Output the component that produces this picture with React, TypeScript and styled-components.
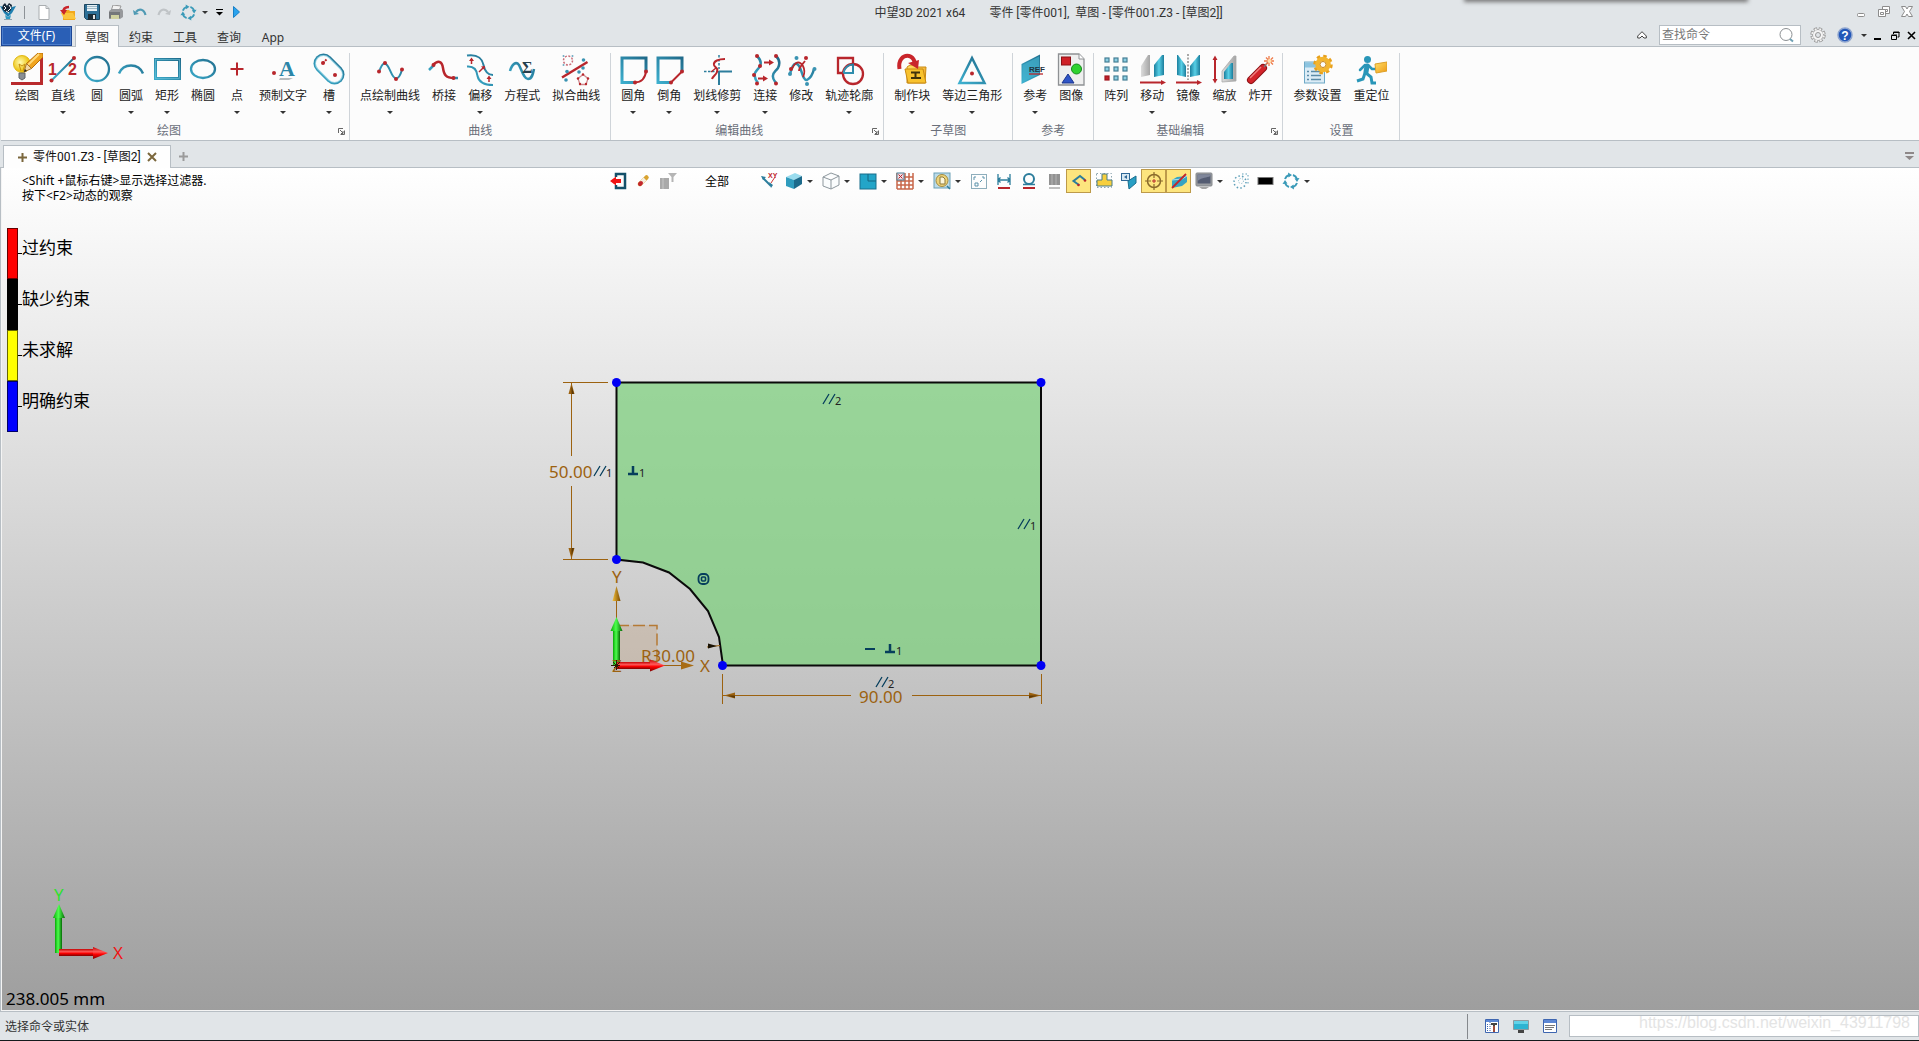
import React from "react";
import styled, { createGlobalStyle, css } from "styled-components";

const UI_FONT = `"Noto Sans", "Noto Sans CJK SC", sans-serif`;
const EDGE = "#b7bec4";
const CHROME = "#e1e5e8";
const DIM = "#9c6210";
const NAVY = "#063e5c";

const GlobalStyle = createGlobalStyle`
  * { box-sizing: border-box; }
  body {
    margin: 0;
    background: ${CHROME};
    font-family: ${UI_FONT};
    font-size: 12px;
    line-height: 16px;
    color: #333;
  }
  button, input, select { font: inherit; color: inherit; }
  button { background: none; border: 0; padding: 0; cursor: default; }
  svg { display: block; flex: none; }
`;

/* ---------- layout ---------- */

const Shell = styled.div`
  display: flex;
  flex-direction: column;
  height: 100vh;
  overflow: hidden;
  position: relative;
`;

const OverlayShadow = styled.div`
  position: absolute;
  top: -2px;
  right: 173px;
  width: 280px;
  height: 2px;
  box-shadow: 0 0 4px 2px #777;
`;

const TitleBar = styled.header`
  display: flex;
  height: 25px;
  flex: none;
`;

const QuickAccess = styled.div`
  display: flex;
  flex: none;
  align-items: center;
  height: 24px;
`;

const QuickButton = styled.button<{ $w?: number }>`
  display: flex;
  align-items: center;
  justify-content: center;
  width: ${(p) => p.$w ?? 24}px;
  height: 24px;
`;

const QuickDivider = styled.span`
  width: 1px;
  height: 13px;
  margin-right: 7px;
  background: #8d9297;
`;

const Title = styled.h1`
  display: flex;
  justify-content: center;
  gap: 24px;
  flex: 1;
  margin: 0;
  padding-top: 5px;
  font-family: Roboto, "Noto Sans CJK SC", sans-serif;
  font-size: 12px;
  font-weight: 400;
  line-height: 16px;
  white-space: pre;
`;

const WindowControls = styled.div`
  display: flex;
  align-items: center;
  width: 66px;
  height: 24px;
  justify-content: space-between;
  padding-right: 4px;
`;

const WindowButton = styled.button`
  width: 16px;
  height: 16px;
`;

const MenuRow = styled.nav`
  display: flex;
  flex: none;
  height: 22px;
  border-bottom: 1px solid ${EDGE};
`;

const FileButton = styled.button`
  width: 71px;
  height: 20px;
  margin: 1px 3px 0 1px;
  border: 1px solid #1d4796;
  box-shadow: inset 0 0 0 1px #4b7dcb;
  background: #2a5fb6;
  color: #fff;
`;

const MenuTab = styled.button<{ $active?: boolean }>`
  width: 44px;
  height: 22px;
  padding-top: 2px;
  border: 1px solid transparent;
  border-bottom: 0;
  ${(p) =>
    p.$active &&
    css`
      background: #fcfcfc;
      border-color: ${EDGE};
    `}
`;

const MenuRight = styled.div`
  display: flex;
  align-items: center;
  margin-left: auto;
  height: 20px;
`;

const SearchBox = styled.label`
  display: flex;
  align-items: center;
  width: 142px;
  height: 20px;
  margin: 0 5px 0 9px;
  padding-right: 6px;
  border: 1px solid ${EDGE};
  background: #fff;
`;

const SearchInput = styled.input`
  flex: 1;
  min-width: 0;
  border: 0;
  outline: 0;
  padding: 0 2px;
  background: none;
  &::placeholder { color: #777; opacity: 1; }
`;

const IconButton = styled.button<{ $w: number }>`
  display: flex;
  align-items: center;
  justify-content: center;
  width: ${(p) => p.$w}px;
  height: 20px;
`;

const Ribbon = styled.div`
  display: flex;
  flex: none;
  height: 94px;
  padding: 6px 0 0 4px;
  margin-left: 1px;
  background: #fcfcfc;
  border-bottom: 1px solid ${EDGE};
`;

const Group = styled.section`
  display: flex;
  flex-direction: column;
  justify-content: space-between;
  border-right: 1px solid #cfd4d9;
`;

const GroupTools = styled.div`
  display: flex;
  padding: 0 4px;
`;

const GroupFooter = styled.div`
  display: flex;
  align-items: center;
  height: 18px;
`;

const GroupTitle = styled.h2`
  flex: 1;
  margin: 0;
  font-size: 12px;
  line-height: 18px;
  font-weight: 400;
  text-align: center;
  color: #6a6f7a;
`;

const Launcher = styled.button`
  display: flex;
  align-items: center;
  justify-content: center;
  width: 16px;
  height: 16px;
`;

const ToolButton = styled.button`
  display: flex;
  flex-direction: column;
  align-items: center;
  min-width: 32px;
  padding: 0 6px;
  color: #222;
`;

const ToolIcon = styled.svg`
  margin: 0 -6px;
`;

const ToolLabel = styled.span`
  padding: 2px 0 7px;
  line-height: 16px;
  white-space: nowrap;
`;

const Caret = styled.span`
  width: 0;
  height: 0;
  flex: none;
  border: 3px solid transparent;
  border-top-color: #333;
  border-bottom: 0;
`;

const DocTabs = styled.div`
  display: flex;
  align-items: flex-end;
  flex: none;
  height: 27px;
  padding: 0 4px 0 3px;
  border-bottom: 1px solid ${EDGE};
`;

const DocTab = styled.div`
  display: flex;
  flex: none;
  align-items: center;
  gap: 5px;
  width: 168px;
  height: 23px;
  padding: 0 13px;
  margin-bottom: -1px;
  border: 1px solid ${EDGE};
  border-bottom: 0;
  background: #fefefe;
  color: #111;
`;

const DocName = styled.span`
  flex: 1;
  font-family: Roboto, "Noto Sans CJK SC", sans-serif;
  white-space: nowrap;
`;

const DocButton = styled.button<{ $end?: boolean }>`
  display: flex;
  align-items: center;
  justify-content: center;
  width: 11px;
  height: 22px;
  margin-left: ${(p) => (p.$end ? "auto" : "7px")};
`;

const TabClose = styled.button`
  width: 10px;
  height: 10px;
`;

const Canvas = styled.main`
  position: relative;
  flex: 1;
  min-height: 0;
  border-left: 1px solid ${EDGE};
  border-bottom: 1px solid ${EDGE};
  background: linear-gradient(#fff, #9e9e9e);
  box-shadow: inset 1px -1px 0 #f4f4f4;
  overflow: hidden;
`;

const ViewToolbar = styled.div`
  display: flex;
  justify-content: center;
  height: 26px;
  padding-top: 1px;
`;

const ViewButton = styled.button<{ $on?: boolean }>`
  display: flex;
  align-items: center;
  justify-content: center;
  width: 25px;
  height: 24px;
  ${(p) =>
    p.$on &&
    css`
      background: #fde57e;
      border: 1px solid #bd9a4a;
    `}
`;

const ViewMenu = styled.button`
  display: flex;
  align-items: center;
  width: 12px;
  height: 24px;
  padding-left: 1px;
`;

const FilterSelect = styled.select`
  appearance: none;
  width: 76px;
  height: 26px;
  padding: 0 0 0 25px;
  border: 0;
  background: none;
  color: #000;
`;

const Hint = styled.p`
  position: absolute;
  top: 5px;
  left: 21px;
  margin: 0;
  line-height: 15px;
  color: #000;
`;

const Legend = styled.ul`
  position: absolute;
  top: 60px;
  left: 6px;
  margin: 0;
  padding: 0;
  list-style: none;
  color: #000;
  font-size: 17px;
`;

const LegendRow = styled.li`
  display: flex;
  align-items: center;
  height: 51px;
`;

const Swatch = styled.span<{ $color: string }>`
  width: 11px;
  height: 51px;
  border: 1px solid rgba(0, 0, 0, 0.6);
  background: ${(p) => p.$color};
`;

const Tick = styled.span`
  width: 4px;
  height: 1px;
  background: #000;
`;

const LegendLabel = styled.span`
  padding-bottom: 11px;
  line-height: 20px;
`;

const Sketch = styled.svg`
  position: absolute;
  top: 192px;
  left: 539px;
`;

const Triad = styled.svg`
  position: absolute;
  left: 40px;
  bottom: 41px;
`;

const Measure = styled.div`
  position: absolute;
  left: 5px;
  bottom: 0;
  font-size: 17px;
  line-height: 24px;
  color: #000;
`;

const StatusBar = styled.footer`
  display: flex;
  align-items: center;
  flex: none;
  height: 29px;
  padding-left: 5px;
  position: relative;
  border-bottom: 1px solid #15191c;
`;

const StatusText = styled.span`
  flex: 1;
  padding-top: 2px;
`;

const StatusTools = styled.div`
  display: flex;
  align-items: center;
  gap: 13px;
  height: 25px;
  padding: 0 11px 0 16px;
  border-left: 1px solid #85898d;
`;

const StatusInput = styled.input`
  width: 350px;
  height: 22px;
  border: 1px solid ${EDGE};
  background: #fff;
`;

const Watermark = styled.span`
  position: absolute;
  right: 9px;
  top: 1px;
  font: 16px/20px "Liberation Sans", Arial, sans-serif;
  color: #e4e4e4;
`;

/* ---------- shared drawing pieces ---------- */

const B = "url(#teal)";
const RED = "#b8262c";
const STEEL = "#2c7d9c";

const HiddenDefs = styled.svg`
  position: absolute;
`;

const Defs = () => (
  <HiddenDefs width="0" height="0" aria-hidden="true">
    <defs>
      <linearGradient id="teal" gradientUnits="userSpaceOnUse" x1="4" y1="30" x2="28" y2="2">
        <stop offset="0" stopColor="#3db0cf" />
        <stop offset="1" stopColor="#1f6888" />
      </linearGradient>
      <linearGradient id="fin" x1="0" y1="0" x2="1" y2="0">
        <stop offset="0" stopColor="#1b7f9e" />
        <stop offset=".5" stopColor="#57cfe6" />
        <stop offset="1" stopColor="#1c7c9b" />
      </linearGradient>
      <linearGradient id="grey" x1="0" y1="0" x2="1" y2="0">
        <stop offset="0" stopColor="#dcdcdc" />
        <stop offset="1" stopColor="#a5a5a5" />
      </linearGradient>
      <linearGradient id="gold" x1="0" y1="0" x2="1" y2="1">
        <stop offset="0" stopColor="#ffe169" />
        <stop offset="1" stopColor="#ee9a16" />
      </linearGradient>
      <radialGradient id="glow" cx=".4" cy=".4">
        <stop offset="0" stopColor="#fffbb0" />
        <stop offset="1" stopColor="#edc412" />
      </radialGradient>
      <linearGradient id="greenV" x1="0" y1="0" x2="1" y2="0">
        <stop offset="0" stopColor="#07a807" />
        <stop offset=".45" stopColor="#4dff4d" />
        <stop offset="1" stopColor="#056b05" />
      </linearGradient>
      <linearGradient id="redH" x1="0" y1="0" x2="0" y2="1">
        <stop offset="0" stopColor="#c40505" />
        <stop offset=".4" stopColor="#ff5a5a" />
        <stop offset=".6" stopColor="#f00" />
        <stop offset="1" stopColor="#7c0202" />
      </linearGradient>
      <linearGradient id="goldHead" x1="0" y1="0" x2="1" y2="0">
        <stop offset="0" stopColor="#f3bf3a" />
        <stop offset="1" stopColor="#7a4a00" />
      </linearGradient>
    </defs>
  </HiddenDefs>
);

const Dots = ({ at, fill = RED, r = 2 }: { at: number[][]; fill?: string; r?: number }) => (
  <>
    {at.map(([x, y]) => (
      <circle key={`${x}-${y}`} cx={x} cy={y} r={r} fill={fill} />
    ))}
  </>
);

const Icon32 = ({ children }: { children: React.ReactNode }) => (
  <ToolIcon width="32" height="33" viewBox="0 0 32 33" fill="none" strokeWidth="2" aria-hidden="true">
    {children}
  </ToolIcon>
);

const Icon18 = ({ children }: { children: React.ReactNode }) => (
  <svg width="18" height="18" viewBox="0 0 18 18" fill="none" aria-hidden="true">
    {children}
  </svg>
);

/* ---------- ribbon icons ---------- */

const icons: Record<string, React.ReactNode> = {
  draw: (
    <>
      <path d="M30.500 5v26M0 30.500h32" stroke="#b92a2d" strokeWidth="3" />
      <circle cx="11" cy="11" r="8.500" fill="url(#glow)" stroke="#e2b91a" strokeWidth="1" />
      <path d="M8 11l2 7M14 11l-2 7M8 11l3 2 3-2" stroke="#c88f10" strokeWidth="1" />
      <path d="M8 20h6v5l-3 2-3-2z" fill="#8a8f94" stroke="#5f6468" strokeWidth="1" />
      <path d="M27 0h5v4L20 16l-5-5z" fill="#f0a41e" stroke="#b76d08" strokeWidth="1" />
      <path d="M28 1L17 12" stroke="#ffd978" strokeWidth="2" />
      <path d="M15.500 10.500l5 5L13 19z" fill="#f4d8a2" stroke="#a8752a" strokeWidth="1" />
      <path d="M13 19l1-3 2 2z" fill="#222" />
    </>
  ),
  line: (
    <>
      <path d="M4.500 27.500L27 5" stroke={B} />
      <Dots at={[[4.5, 27.5], [27, 5]]} />
      <text x="1" y="22" fontFamily="Liberation Sans" fontWeight="700" fontSize="16" fill={RED}>1</text>
      <text x="21" y="22" fontFamily="Liberation Sans" fontWeight="700" fontSize="16" fill={RED}>2</text>
    </>
  ),
  circle: <circle cx="16" cy="16" r="12" stroke={B} strokeWidth="2.300" />,
  arc: <path d="M4 20.500A13 13 0 0 1 28 20.500" stroke={B} strokeWidth="2.500" />,
  rect: (
    <>
      <rect x="4.500" y="6.500" width="24" height="19" stroke={B} strokeWidth="3" />
      <rect x="4.500" y="6.500" width="24" height="19" stroke="#6fc3da" strokeWidth=".6" />
    </>
  ),
  ellipse: <ellipse cx="16" cy="16" rx="12" ry="9" stroke={B} strokeWidth="2.300" />,
  point: <path d="M16 9.500v13M9.500 16h13" stroke={RED} />,
  text: (
    <>
      <Dots at={[[7, 20]]} />
      <path d="M13 25h13l-4 2h-10z" fill="#b9bcbe" />
      <text x="12" y="23" fontFamily="Liberation Serif" fontWeight="700" fontSize="22" fill="#2b86a8">A</text>
    </>
  ),
  slot: (
    <>
      <path d="M10.500 10.500l11 11" stroke={B} strokeWidth="20" strokeLinecap="round" />
      <path d="M10.500 10.500l11 11" stroke="#8fd0e2" strokeWidth="17" strokeLinecap="round" />
      <path d="M10.500 10.500l11 11" stroke="#fcfcfc" strokeWidth="15" strokeLinecap="round" />
      <Dots at={[[10, 10], [22, 22]]} />
      <path d="M10 10l4-4" stroke={RED} strokeDasharray="2 1" />
    </>
  ),
  spline: (
    <>
      <path d="M5 19C7 13 9 10 11 10.500C16 12 17 25 22 25.500C26 25 27 20 28 16.500" stroke={B} />
      <Dots at={[[5, 18.5], [11, 10], [22, 26], [28, 16.5]]} />
    </>
  ),
  bridge: (
    <>
      <path d="M1 17l5-5M25 25h5" stroke={B} strokeWidth="2.500" />
      <path d="M5 12C10 7 14 8 15 15C16 22 18 25 26 25" stroke={RED} strokeWidth="2.500" />
      <Dots at={[[5.5, 12], [25.5, 25]]} />
    </>
  ),
  offset: (
    <>
      <path d="M3 2.500C14 1 18 5 19.500 12C21 19 24 22 29 22M3 13.500C10 13 13 17 13.500 23C15 30 22 32 29 32" stroke={B} />
      <path d="M7.500 11V6M15 19l4-4M25 29v-5" stroke={RED} strokeWidth="1.500" />
      <path d="M5 8l2.500-3.500L10 8zM17 13.500l4-.5-.5 4zM22.500 26l2.500-3.500L27.500 26z" fill={RED} />
    </>
  ),
  equation: (
    <>
      <path d="M4 18C6 11 10 8 13 12C16 18 18 26 22 26C26 26 27 21 28 16" stroke={B} strokeWidth="2.500" />
      <text x="16" y="20" fontFamily="Liberation Serif" fontWeight="700" fontSize="16" fill="#263f4c">Σ</text>
    </>
  ),
  fit: (
    <>
      <path d="M2 24.500L27.500 9" stroke={RED} strokeWidth="2.500" />
      <circle cx="8" cy="7.500" r="4.500" stroke="#c96f7a" strokeWidth="1.500" strokeDasharray="2 1.500" />
      <path d="M23 21.500l5 4-2 6h-6l-2-6z" stroke="#d08a90" strokeWidth="1.300" />
      <Dots at={[[3.500, 3], [12.500, 3], [3.500, 12]]} r={1} fill="#6da9c0" />
      <Dots at={[[7, 18.5], [6, 27], [19, 19], [23.500, 7], [23, 15]]} r={1.800} fill="#3a93b2" />
      <Dots at={[[23, 21.5], [28, 25.5], [26, 31], [20, 31], [18, 25.5]]} r={1.200} />
    </>
  ),
  fillet: (
    <>
      <path d="M18 29.500H5V5H29V18" stroke={B} strokeWidth="3" />
      <path d="M29 18Q28 29 18 29.500" stroke={RED} />
      <Dots at={[[29, 18.5], [18, 29.5]]} />
    </>
  ),
  chamfer: (
    <>
      <path d="M18 29.500H5V5H29V18" stroke={B} strokeWidth="3" />
      <path d="M29 18.500L18 29.500" stroke={RED} />
      <Dots at={[[29, 18.5], [18, 29.5]]} />
    </>
  ),
  trim: (
    <>
      <path d="M18 18v14M18 18.500h13" stroke={STEEL} />
      <path d="M18 2v14M3 18.500h13" stroke={STEEL} strokeWidth="1.500" strokeDasharray="2.500 1.500" />
      <path d="M24 6C18 6 12 8 13 12C14 15 18 15 16 19C15 22 12 23 11 26" stroke={RED} />
      <path d="M10 19l5-4" stroke={RED} strokeWidth="1.500" />
    </>
  ),
  connect: (
    <>
      <path d="M8 3C11 6 13 9 11 13C9 17 5 19 5.500 22C6 26 7 28 9 30M27 3C31 7 31 11 29 15C26 19 23 20 24 24C24 27 26 28 27 30" stroke={B} strokeWidth="2.500" />
      <path d="M15 9.500h6M9 25.500h6" stroke={RED} />
      <path d="M20 6.500l5 3-5 3zM14 22.500l5 3-5 3z" fill={RED} />
      <Dots at={[[8, 3], [11, 13], [5, 22], [8, 30.5], [27, 3], [27, 30.5]]} />
    </>
  ),
  modify: (
    <>
      <path d="M5 21C7 13 9 10 12 11C17 13 17 28 22 27C26 25 28 20 29 16" stroke={B} strokeWidth="2.500" />
      <path d="M7 16C10 9 14 7 18 13C20 17 20 20 18 24M14 18C14 14 17 12 20 8" stroke={RED} strokeWidth="1.800" />
      <Dots at={[[6, 16], [21, 5]]} />
      <Dots at={[[11.5, 5], [29.5, 16], [22, 31], [5, 21]]} fill="#3a93b2" />
    </>
  ),
  contour: (
    <>
      <path d="M10.500 20H5V5h15v6" stroke={RED} strokeWidth="2.300" />
      <circle cx="20" cy="21" r="10" stroke={RED} strokeWidth="2.300" />
      <path d="M10.500 20H20V11.500A9.500 9.500 0 0 0 10.500 20" stroke={B} />
    </>
  ),
  block: (
    <>
      <path d="M11 14l3-2h5l2 2h9l-1 16H11z" fill="url(#gold)" stroke="#c98a12" strokeWidth="1" />
      <path d="M9 16h18l3 14H12z" fill="#f8c22e" stroke="#c98a12" strokeWidth="1" />
      <path d="M15 19.500h9M19.500 19v6M15 25h10" stroke="#40330b" />
      <path d="M3.500 16C2 7 7 2 13 3C17 4 18 7 18.500 9" stroke="#c9252b" strokeWidth="4" />
      <path d="M12 10l11-3-1 9z" fill="#c9252b" />
    </>
  ),
  triangle: (
    <>
      <path d="M16 5L3.500 30h25z" stroke={B} strokeWidth="2.500" />
      <Dots at={[[16, 20.5]]} />
    </>
  ),
  reference: (
    <>
      <path d="M2.500 11L21 1.500V22L2.500 31z" fill="url(#teal)" />
      <path d="M3.500 12L20 3.500V21L3.500 29z" fill="#48b8d2" opacity=".6" />
      <text x="10" y="19" fontFamily="Liberation Sans" fontWeight="700" fontSize="8" fill="#1f3340">REF</text>
      <path d="M10 21h14" stroke={RED} strokeWidth="1.300" />
    </>
  ),
  image: (
    <>
      <path d="M3.500 1H24l5 5v26H3.500z" fill="#efefef" stroke="#8e9194" strokeWidth="1.300" />
      <path d="M24 1v5h5" fill="#fff" stroke="#8e9194" strokeWidth="1" />
      <rect x="6.500" y="4" width="9" height="8" fill="#cf2027" stroke="#8d1015" strokeWidth="1" />
      <circle cx="21.500" cy="16" r="5" fill="#2fd22f" stroke="#148a1c" strokeWidth="1" />
      <path d="M13 21l6 9H7z" fill="#2f55c7" stroke="#1b348c" strokeWidth="1" />
    </>
  ),
  array: (
    <>
      {[5, 14, 23].map((y) =>
        [5, 14, 23].map((x) => (
          <rect
            key={`${x}-${y}`}
            x={x}
            y={y}
            width="4"
            height="4"
            fill={x === 5 && y === 23 ? "#c0202a" : "#8ccfe4"}
            stroke={x === 5 && y === 23 ? "#a01820" : "#467f95"}
            strokeWidth="1.200"
          />
        )),
      )}
    </>
  ),
  move: (
    <>
      <path d="M5 24V13l7-11h2v20z" fill="url(#grey)" />
      <path d="M18 24V12l8-10h2v20z" fill="url(#fin)" />
      <path d="M4 29.500h22" stroke={RED} />
      <path d="M25 27l5 2.500-5 2.500z" fill={RED} />
    </>
  ),
  mirror: (
    <>
      <path d="M5 22V2h1l8 11v11z" fill="url(#fin)" />
      <path d="M18 24V13l9-11h1v20z" fill="url(#fin)" />
      <path d="M16 1v26" stroke="#555" strokeWidth="1" strokeDasharray="2 1.500" />
      <path d="M4 29.500h22" stroke={RED} />
      <path d="M25 27l5 2.500-5 2.500z" fill={RED} />
    </>
  ),
  scale: (
    <>
      <path d="M7 5v22" stroke={RED} />
      <path d="M4.500 7L7 2.500 9.500 7zM4.500 26L7 30.500 9.500 26z" fill={RED} />
      <path d="M14 29V18L26 3h2v25z" fill="url(#grey)" stroke="#aaa" strokeWidth=".8" />
      <path d="M16 26v-7l7-9h2v16z" fill="url(#fin)" />
    </>
  ),
  explode: (
    <>
      <path d="M7 27L19 15" stroke="#8c1014" strokeWidth="8" strokeLinecap="round" />
      <path d="M7 27L19 15" stroke="#d3242a" strokeWidth="6" strokeLinecap="round" />
      <path d="M6 25L17 14" stroke="#f08080" strokeWidth="1.500" />
      <path d="M20 14l4-5" stroke="#777" strokeWidth="1.500" />
      <path d="M25 3v10M20 8h10M22 4.500l7 7M29 4.500l-7 7" stroke="#ee7a4a" strokeWidth="1.300" />
      <circle cx="25.500" cy="8" r="2" fill="#ffe2b0" />
    </>
  ),
  settings: (
    <>
      <rect x="3.500" y="9" width="20" height="21" fill="#dcecf6" stroke="#6fa9c6" strokeWidth="1" />
      <rect x="4" y="9.500" width="19" height="5" fill="#8cc4e0" />
      <path d="M6 18.500h2M6 22.500h2M6 26.500h2M10 18.500h10M10 22.500h10M10 26.500h10" stroke="#5b8ba8" strokeWidth="1.500" />
      <circle cx="22" cy="11.500" r="8" stroke="#e8a01c" strokeWidth="3.500" strokeDasharray="3.300 2.983" />
      <circle cx="22" cy="11.500" r="5.500" fill="#fff" stroke="#f3b52e" strokeWidth="4.500" />
      <circle cx="22" cy="11.500" r="3" fill="#fcfcfc" stroke="#c9820f" strokeWidth="1" />
    </>
  ),
  relocate: (
    <>
      <circle cx="12.500" cy="6.500" r="3.500" fill="#2996b8" />
      <path d="M12 13L11 19" stroke="#2996b8" strokeWidth="5" strokeLinecap="round" />
      <path d="M13 12l4 4h5M10 12l-5 5" stroke="#2996b8" strokeWidth="2.500" strokeLinecap="round" />
      <path d="M10 20l-2 6-6 2M11 20l5 4 1 6h4" stroke="#2996b8" strokeWidth="3" />
      <path d="M20 11l12-2v9l-11 2z" fill="url(#gold)" stroke="#dda029" strokeWidth="1" />
    </>
  ),
};

type Tool = [icon: string, label: string, menu?: boolean];

const ribbonGroups: { title: string; launcher?: boolean; tools: Tool[] }[] = [
  {
    title: "绘图",
    launcher: true,
    tools: [
      ["draw", "绘图"],
      ["line", "直线", true],
      ["circle", "圆"],
      ["arc", "圆弧", true],
      ["rect", "矩形", true],
      ["ellipse", "椭圆"],
      ["point", "点", true],
      ["text", "预制文字", true],
      ["slot", "槽", true],
    ],
  },
  {
    title: "曲线",
    tools: [
      ["spline", "点绘制曲线", true],
      ["bridge", "桥接"],
      ["offset", "偏移", true],
      ["equation", "方程式"],
      ["fit", "拟合曲线"],
    ],
  },
  {
    title: "编辑曲线",
    launcher: true,
    tools: [
      ["fillet", "圆角", true],
      ["chamfer", "倒角", true],
      ["trim", "划线修剪", true],
      ["connect", "连接", true],
      ["modify", "修改"],
      ["contour", "轨迹轮廓", true],
    ],
  },
  {
    title: "子草图",
    tools: [
      ["block", "制作块", true],
      ["triangle", "等边三角形", true],
    ],
  },
  {
    title: "参考",
    tools: [
      ["reference", "参考", true],
      ["image", "图像"],
    ],
  },
  {
    title: "基础编辑",
    launcher: true,
    tools: [
      ["array", "阵列"],
      ["move", "移动", true],
      ["mirror", "镜像"],
      ["scale", "缩放", true],
      ["explode", "炸开"],
    ],
  },
  {
    title: "设置",
    tools: [
      ["settings", "参数设置"],
      ["relocate", "重定位"],
    ],
  },
];

/* ---------- view toolbar icons ---------- */

const RingArrows = () => (
  <>
    <path d="M3 7A6.500 6.500 0 0 1 7 3M11 3A6.500 6.500 0 0 1 15 7M15 11A6.500 6.500 0 0 1 11 15M7 15A6.500 6.500 0 0 1 3 11" stroke="#3a9ab8" strokeWidth="2" />
    <path d="M6 .5l4 2.500-3.500 2.500zM17.500 6l-2.500 4-2.500-3.500zM12 17.500L8 15l3.500-2.500zM.5 12L3 8l2.500 3.500z" fill="#3a9ab8" />
  </>
);

const viewIcons: Record<string, React.ReactNode> = {
  exit: (
    <>
      <path d="M7 5V2h9v14H7v-3" stroke="#14506a" strokeWidth="2.500" />
      <path d="M1 9l6-4.500V7h5v4H7v2.500z" fill="#f01414" />
    </>
  ),
  erase: (
    <>
      <path d="M6 12L12.500 5.500" stroke="#d9a431" strokeWidth="4.500" strokeLinecap="round" />
      <path d="M7 11l4-4" stroke="#f6efe0" strokeWidth="4" />
      <path d="M6 12l1-1" stroke="#c2262c" strokeWidth="4" strokeLinecap="round" />
    </>
  ),
  filter: (
    <>
      <path d="M1 6h9v11H1z" fill="#a9a9a9" />
      <path d="M4 6v11" stroke="#c7c7c7" />
      <path d="M9 1h9l-3.500 4v5h-2V5z" fill="#b5b5b5" />
    </>
  ),
  xy: (
    <>
      <path d="M3 6l8 8" stroke={STEEL} strokeWidth="2" />
      <path d="M11 16L9 10l4 3zM1 4l5 1-3 3z" fill={STEEL} />
      <path d="M11 11l4-6" stroke="#c33" />
      <text x="8" y="6" fontFamily="Liberation Sans" fontWeight="700" fontSize="7" fill="#c0252b">XY</text>
    </>
  ),
  solid: (
    <>
      <path d="M1 5l9-4 7 3-8 4z" fill="#9adcee" />
      <path d="M1 5l8 3v9l-8-3z" fill="#2f9cbe" />
      <path d="M9 8l8-4v8l-8 5z" fill="#1c6a8b" />
    </>
  ),
  wire: <path d="M1 5l8-4 8 3v9l-8 4-8-3zM1 5l8 3 8-4M9 8v9" stroke="#8d979d" fill="#fafcfd" />,
  plane: (
    <>
      <rect x="1" y="2" width="16" height="15" fill="#23a5c8" stroke="#1b6f8b" />
      <path d="M9 2v7h8" stroke="#176580" />
    </>
  ),
  grid: (
    <>
      <path d="M1 5h16M1 9h16M1 13h16M5 1v16M9 1v16M13 1v16M1 17h16M17 1v16M1 1v16" stroke="#c8674a" strokeWidth="1.500" />
      <rect x="1" y="1" width="7" height="7" fill="#f2dadf" stroke="#4a7f96" />
      <path d="M2.500 2.500l4 4M6.500 2.500l-4 4" stroke="#b2262e" />
    </>
  ),
  fitView: (
    <>
      <rect x="1" y="1" width="16" height="15" fill="#bcdbe8" stroke="#6b9fb5" />
      <circle cx="9" cy="8.500" r="6" fill="#ecd37a" stroke="#a38b3f" />
      <path d="M7 5h3l2 2v5H7z" fill="#fbf6dc" stroke="#8d7937" />
      <path d="M14 14l3 3" stroke="#2f7d9c" strokeWidth="1.500" />
    </>
  ),
  window: (
    <>
      <rect x="1.500" y="2.500" width="15" height="14" stroke="#8eaebc" />
      <path d="M4 8V5h2M12 5h2v2M10 10l2-2M5 11h3v3H5z" stroke="#5c93ab" />
    </>
  ),
  width: (
    <>
      <path d="M3 2v11M15 2v11M3 8h12M5.500 5.500L3 8l2.500 2.500M12.500 5.500L15 8l-2.500 2.500" stroke={STEEL} strokeWidth="1.300" />
      <path d="M3 16h12" stroke={RED} strokeWidth="2" />
    </>
  ),
  ring: (
    <>
      <circle cx="9" cy="7" r="5" stroke={STEEL} strokeWidth="2" />
      <path d="M3 12.500h12" stroke={STEEL} strokeWidth="1.500" />
      <path d="M3 16h12" stroke={RED} strokeWidth="2" />
    </>
  ),
  hatch: (
    <>
      <rect x="4" y="2" width="11" height="11" fill="#929292" />
      <path d="M7 2v11M11 2v11" stroke="#b4b4b4" />
      <path d="M4 16h11" stroke="#aaa" strokeWidth="1.500" />
    </>
  ),
  open: (
    <>
      <path d="M9 13L3.500 9 10 4l5 4" stroke={STEEL} strokeWidth="2" />
      <Dots at={[[15, 8.5], [8.5, 13]]} r={1.300} />
    </>
  ),
  tee: (
    <>
      <rect x="1.500" y="1.500" width="15" height="14" stroke="#8ca5b0" strokeDasharray="1.500 2" />
      <path d="M7 2h5v6h5v6H2V8h5z" fill="#f7cf3d" stroke="#4a7c87" />
    </>
  ),
  section: (
    <>
      <rect x="1.500" y="1.500" width="8" height="7" fill="#d7e8f2" stroke="#2e6796" />
      <path d="M7 3L4 5l3 2z" fill="#2e6796" />
      <path d="M8 9l8-5v7l-7 6z" fill="#289fc4" stroke="#1a6e8f" />
    </>
  ),
  target: (
    <>
      <circle cx="9" cy="9" r="6.500" stroke="#8a6a2c" strokeWidth="1.500" />
      <path d="M9 0v6M9 12v6M0 9h6M12 9h6" stroke="#8a6a2c" strokeWidth="1.200" />
      <path d="M9 7v4M7 9h4" stroke="#b8262c" />
    </>
  ),
  clip: (
    <>
      <path d="M2 8l5-3 10-1v6l-5 4-10 2z" fill="#36a4c2" />
      <path d="M2 8l10-1 5-3" stroke="#a8e0ee" />
      <path d="M2 16L16 2" stroke="#c0262c" strokeWidth="1.800" />
    </>
  ),
  monitor: (
    <>
      <rect x="1" y="1" width="16" height="13" rx="1" fill="#9a9da1" stroke="#85888c" />
      <rect x="2.500" y="2.500" width="13" height="9" fill="#545c72" />
      <path d="M2.500 9c5-4 9-3 13-5V2.500h-13z" fill="#7f869a" />
      <path d="M4 15h10l-3 2H7z" fill="#a5a5a5" />
    </>
  ),
  dotted: (
    <>
      <circle cx="8" cy="10" r="6" stroke="#5e9fb8" strokeWidth="1.500" strokeDasharray="1.500 2.200" />
      <circle cx="9" cy="9" r="2.500" stroke="#7eb2c6" strokeDasharray="1 1.500" />
      <path d="M10 2h6v10" stroke="#5e9fb8" strokeDasharray="1.500 2" />
    </>
  ),
  swatch: <rect x="1" y="5.500" width="15" height="7" fill="#000" stroke="#777" />,
  rotate: <RingArrows />,
};

type ViewTool = [name: string, label: string, mode?: "menu" | "on"];

const leadTools: ViewTool[] = [
  ["exit", "退出"],
  ["erase", "清除"],
  ["filter", "过滤"],
];

const viewTools: ViewTool[] = [
  ["xy", "坐标"],
  ["solid", "着色", "menu"],
  ["wire", "线框", "menu"],
  ["plane", "视图", "menu"],
  ["grid", "栅格", "menu"],
  ["fitView", "缩放视图", "menu"],
  ["window", "窗口"],
  ["width", "标注"],
  ["ring", "约束"],
  ["hatch", "填充"],
  ["open", "开放端点", "on"],
  ["tee", "形状"],
  ["section", "剖面"],
  ["target", "捕捉", "on"],
  ["clip", "着色区域", "on"],
  ["monitor", "显示", "menu"],
  ["dotted", "线型"],
  ["swatch", "颜色"],
  ["rotate", "旋转", "menu"],
];

const ViewItem = ({ tool: [name, label, mode] }: { tool: ViewTool }) => (
  <>
    <ViewButton $on={mode === "on"} aria-label={label}>
      <Icon18>{viewIcons[name]}</Icon18>
    </ViewButton>
    {mode === "menu" && (
      <ViewMenu aria-label={`${label}选项`}>
        <Caret />
      </ViewMenu>
    )}
  </>
);

/* ---------- sketch ---------- */

const Parallel = ({ x, y, n }: { x: number; y: number; n: string }) => (
  <g>
    <path d={`M${x} ${y + 10}l6-10M${x + 6} ${y + 10}l6-10`} stroke={NAVY} strokeWidth="1.300" />
    <text x={x + 12} y={y + 11} fontSize="11" fill="#222">{n}</text>
  </g>
);

const Perpendicular = ({ x, y }: { x: number; y: number }) => (
  <g>
    <path d={`M${x} ${y + 8}h10M${x + 5} ${y}v8`} stroke={NAVY} strokeWidth="2.500" />
    <text x={x + 11} y={y + 11} fontSize="11" fill="#222">1</text>
  </g>
);

const SketchDrawing = () => (
  <Sketch width="520" height="360" viewBox="540 360 520 360" fill="none" fontFamily="Noto Sans">
    <path
      d="M616.500 382.500H1041V665.500H723L719 637 708 611 690 589 669 572.500 643 562.500 616.500 559.500z"
      fill="#7fcf7f"
      fillOpacity=".75"
      stroke="#0a0a0a"
      strokeWidth="2"
    />
    <g stroke={DIM}>
      <path d="M563 382.500h45M563 559.500h45M571.500 383v73M571.500 486v73" />
      <path d="M722.500 674v30M1041.500 674v30M723 695.500h128M912 695.500h129" />
    </g>
    <g fill={DIM}>
      <path d="M571.500 383l3 11h-6zM571.500 559l3-11h-6zM724 695.500l11-3v6zM1041 695.500l-12-3v6z" />
    </g>
    <g fill="#5e3a06">
      <path d="M571.500 386l2.500 8h-2.500zM571.500 556l2.500-8h-2.500zM727 695.500l8 2.500v-2.500zM1038 695.500l-9 2.500v-2.500z" />
    </g>
    <rect x="617" y="625" width="40" height="40" fill="#c98d50" fillOpacity=".18" />
    <path d="M617 625.500h40V665" stroke="#b57a35" strokeWidth="1.500" strokeDasharray="12 4" />
    <path d="M616.500 665V600M617 665.500h66" stroke={DIM} />
    <path d="M616.500 586l4 15h-8z" fill="url(#goldHead)" />
    <path d="M694 665.500l-13-4v8z" fill="#a86c14" />
    <rect x="613" y="630" width="7" height="35" fill="url(#greenV)" />
    <path d="M616.500 617l6 14h-12z" fill="url(#greenV)" />
    <g fontSize="17" fill={DIM}>
      <text x="549" y="478">50.00</text>
      <text x="859" y="703">90.00</text>
      <text x="641" y="662">R30.00</text>
      <text x="612" y="583">Y</text>
      <text x="700" y="672">X</text>
      <text x="612" y="672">Z</text>
    </g>
    <rect x="617" y="662" width="34" height="7" fill="url(#redH)" />
    <path d="M665 665.500l-15-6v12z" fill="url(#redH)" />
    <path d="M611 665.500h9M616.500 660v10M613 662l6 6M620 662l-6 6" stroke="#2c1c05" />
    <path d="M707 647l13-1.500" stroke={DIM} />
    <path d="M717 646l-9-2.500v5z" fill="#1a1204" />
    <Parallel x={594} y={466} n="1" />
    <Parallel x={823} y={394} n="2" />
    <Parallel x={1018} y={519} n="1" />
    <Parallel x={876} y={677} n="2" />
    <Perpendicular x={628} y={466} />
    <Perpendicular x={885} y={644} />
    <path d="M865 649h10" stroke={NAVY} strokeWidth="2" />
    <rect x="698.500" y="574" width="10" height="10" rx="4" stroke={NAVY} strokeWidth="1.800" />
    <rect x="701.500" y="577" width="4" height="4" rx="1" stroke={NAVY} strokeWidth="1.600" />
    <Dots at={[[616.5, 382.5], [1041, 382.5], [616.5, 559.5], [722.5, 665.5], [1041, 665.5]]} fill="#0000f5" r={4.500} />
  </Sketch>
);

const TriadDrawing = () => (
  <Triad width="100" height="90" viewBox="40 880 100 90" fontFamily="Noto Sans" fontSize="17">
    <rect x="54" y="917" width="7" height="36" fill="url(#greenV)" />
    <path d="M58 904l6 14H52z" fill="url(#greenV)" />
    <rect x="58" y="949" width="35" height="7" fill="url(#redH)" />
    <path d="M107 953l-15-6v12z" fill="url(#redH)" />
    <text x="53" y="901" fill="#2fe02f">Y</text>
    <text x="112" y="959" fill="#f01414">X</text>
  </Triad>
);

/* ---------- page ---------- */

const legend = [
  ["#ff0000", "过约束"],
  ["#000000", "缺少约束"],
  ["#ffff00", "未求解"],
  ["#0000ff", "明确约束"],
];

const QuickAccessBar = () => (
  <QuickAccess>
    <QuickButton $w={16} aria-label="中望3D">
      <svg width="16" height="18" viewBox="0 0 16 18">
        <path d="M0 3l4 7 4 4 4-4 4-7-4 1-4-2-4 2z" fill="#1f7fb0" />
        <path d="M3 2l2-2 2 3 2-3 3 2-1 5-3 3-4-2-2-3z" fill="#16283a" />
        <path d="M4 3l2 2-2 2M9 2l2 3-3 3M6 8l3 2" stroke="#fff" fill="none" />
        <path d="M5 12l3 2 3-2-1 4H6z" fill="#2f9bc4" />
        <path d="M4 16.500h8" stroke="#8fa3ae" />
      </svg>
    </QuickButton>
    <QuickButton $w={8} aria-label="系统菜单" />
    <QuickDivider />
    <QuickButton aria-label="新建">
      <svg width="12" height="15" viewBox="0 0 12 15">
        <path d="M1 .5h7l3 3v11H1z" fill="#fff" stroke="#a9adb0" />
        <path d="M8 .5v3h3" fill="none" stroke="#a9adb0" />
      </svg>
    </QuickButton>
    <QuickButton aria-label="打开">
      <svg width="16" height="15" viewBox="0 0 16 15">
        <path d="M3 7l3-2h3l1 1h5v9H3z" fill="#f2a81d" />
        <path d="M1 8h12l3 6H4z" fill="#fbc53c" />
        <path d="M3 8C3 4 5 2 9 2" stroke="#c9252b" strokeWidth="2.500" fill="none" />
        <path d="M0 5l7 0-3 5z" fill="#c9252b" />
      </svg>
    </QuickButton>
    <QuickButton aria-label="保存">
      <svg width="16" height="16" viewBox="0 0 16 16">
        <path d="M.5.500h15v15h-13l-2-2z" fill="#2d6f96" stroke="#1e4760" />
        <path d="M3 1h10v6H3z" fill="#e8f1f6" />
        <path d="M3 2.500h10M3 4.500h10" stroke="#9db8c6" />
        <path d="M4 10h8v6H4z" fill="#1b2d38" />
        <path d="M9 11h2v4H9z" fill="#e5e5e5" />
      </svg>
    </QuickButton>
    <QuickButton aria-label="打印">
      <svg width="16" height="15" viewBox="0 0 16 15">
        <path d="M5 0l8 1-2 5H3z" fill="#f2f2f2" stroke="#999" />
        <path d="M1 6l3-2h10l1 2v6l-3 2H1z" fill="#97999c" />
        <path d="M1 7h11v6H1z" fill="#74777a" />
        <path d="M3 10h8v4H3z" fill="#cfd1a0" />
      </svg>
    </QuickButton>
    <QuickButton aria-label="撤销">
      <svg width="14" height="10" viewBox="0 0 14 10">
        <path d="M3 5C6 1 11 2 12.500 8" stroke="#4f9ab4" strokeWidth="2.200" fill="none" />
        <path d="M0 3l1 5 5-1z" fill="#4f9ab4" />
      </svg>
    </QuickButton>
    <QuickButton aria-label="重做">
      <svg width="14" height="10" viewBox="0 0 14 10">
        <path d="M11 5C8 1 3 2 1.500 8" stroke="#bfc3c6" strokeWidth="2.200" fill="none" />
        <path d="M14 3l-1 5-5-1z" fill="#bfc3c6" />
      </svg>
    </QuickButton>
    <QuickButton aria-label="重生成">
      <svg width="17" height="17" viewBox="0 0 18 18" fill="none">
        <RingArrows />
      </svg>
    </QuickButton>
    <QuickButton $w={10} aria-label="重生成选项">
      <Caret />
    </QuickButton>
    <QuickButton $w={18} aria-label="自定义">
      <svg width="7" height="7" viewBox="0 0 7 7">
        <path d="M0 .5h7" stroke="#000" />
        <path d="M0 3h7L3.500 6.500z" fill="#000" />
      </svg>
    </QuickButton>
    <QuickButton $w={16} aria-label="播放">
      <svg width="7" height="12" viewBox="0 0 7 12">
        <path d="M.5.500L6.500 6l-6 5.500z" fill="#2aa3ee" stroke="#187fc6" />
      </svg>
    </QuickButton>
  </QuickAccess>
);

export default function App() {
  return (
    <Shell>
      <GlobalStyle />
      <Defs />
      <TitleBar>
        <QuickAccessBar />
        <Title>
          <span>中望3D 2021 x64</span>
          <span>{"零件 [零件001],  草图 - [零件001.Z3 - [草图2]]"}</span>
        </Title>
        <WindowControls>
          <WindowButton aria-label="最小化">
            <svg width="16" height="16" viewBox="0 0 16 16">
              <rect x="4.500" y="9.500" width="7" height="3" rx="1" fill="#fff" stroke="#8c8c8c" />
            </svg>
          </WindowButton>
          <WindowButton aria-label="还原">
            <svg width="16" height="16" viewBox="0 0 16 16" fill="#fff" stroke="#8c8c8c">
              <path d="M6.500 2.500h7v7h-7zM8.500 5.500h3v2h-3z" />
              <path d="M2.500 5.500h7v7h-7zM4.500 8.500h3v2h-3z" />
            </svg>
          </WindowButton>
          <WindowButton aria-label="关闭">
            <svg width="16" height="16" viewBox="0 0 16 16">
              <path d="M2.500 2.500h4L8 5l1.500-2.500h4l-3 5 3 5h-4L8 10l-1.500 2.500h-4l3-5z" fill="#fff" stroke="#8c8c8c" />
            </svg>
          </WindowButton>
        </WindowControls>
      </TitleBar>

      <MenuRow>
        <FileButton>文件(F)</FileButton>
        <MenuTab $active>草图</MenuTab>
        <MenuTab>约束</MenuTab>
        <MenuTab>工具</MenuTab>
        <MenuTab>查询</MenuTab>
        <MenuTab>App</MenuTab>
        <MenuRight>
          <IconButton $w={16} aria-label="折叠功能区">
            <svg width="10" height="8" viewBox="0 0 10 8" fill="#fff" stroke="#444">
              <path d="M5 .700L9.300 5v2H7L5 5 3 7H.7V5z" />
            </svg>
          </IconButton>
          <SearchBox>
            <SearchInput type="text" placeholder="查找命令" aria-label="查找命令" />
            <svg width="16" height="16" viewBox="0 0 16 16" fill="none">
              <circle cx="8" cy="7.500" r="6" stroke="#8b8f92" />
              <path d="M12 12l3 2.500" stroke="#6fa0b4" strokeWidth="2" />
            </svg>
          </SearchBox>
          <IconButton $w={24} aria-label="设置">
            <svg width="16" height="16" viewBox="0 0 16 16" fill="none">
              <circle cx="8" cy="8" r="6" stroke="#999" strokeWidth="3.500" strokeDasharray="3.200 1.512" />
              <circle cx="8" cy="8" r="5.500" fill="#f4f4f4" stroke="#a6a6a6" />
              <circle cx="8" cy="8" r="6" stroke="#f4f4f4" strokeWidth="1.800" strokeDasharray="1.800 2.912" strokeDashoffset="-.7" />
              <circle cx="8" cy="8" r="2.500" fill={CHROME} stroke="#999" />
            </svg>
          </IconButton>
          <IconButton $w={30} aria-label="帮助">
            <svg width="16" height="16" viewBox="0 0 16 16">
              <circle cx="8" cy="8" r="7" fill="#2357b8" stroke="#8ea5cf" strokeWidth="1.500" />
              <text x="8" y="12.500" textAnchor="middle" fontFamily="Liberation Sans" fontWeight="700" fontSize="12" fill="#fff">?</text>
            </svg>
          </IconButton>
          <IconButton $w={7} aria-label="帮助选项">
            <Caret />
          </IconButton>
          <IconButton $w={20} aria-label="最小化文档">
            <svg width="9" height="9" viewBox="0 0 9 9">
              <path d="M1 8h7" stroke="#000" strokeWidth="2" />
            </svg>
          </IconButton>
          <IconButton $w={16} aria-label="还原文档">
            <svg width="9" height="9" viewBox="0 0 9 9" fill="none" stroke="#000">
              <path d="M2.500 3V1H8v5H6.500M.5 4.500h5v4h-5zM2 1.500h6.500M.5 4h5.500" />
            </svg>
          </IconButton>
          <IconButton $w={16} aria-label="关闭文档">
            <svg width="9" height="9" viewBox="0 0 9 9">
              <path d="M1 1l7 7M8 1L1 8" stroke="#000" strokeWidth="1.600" />
            </svg>
          </IconButton>
        </MenuRight>
      </MenuRow>

      <Ribbon>
        {ribbonGroups.map((group) => (
          <Group key={group.title}>
            <GroupTools>
              {group.tools.map(([icon, label, menu]) => (
                <ToolButton key={label}>
                  <Icon32>{icons[icon]}</Icon32>
                  <ToolLabel>{label}</ToolLabel>
                  {menu && <Caret />}
                </ToolButton>
              ))}
            </GroupTools>
            <GroupFooter>
              <GroupTitle>{group.title}</GroupTitle>
              {group.launcher && (
                <Launcher aria-label={`${group.title}选项`}>
                  <svg width="7" height="7" viewBox="0 0 7 7" fill="none" stroke="#666">
                    <path d="M.5 5V.5H5M2 2l3 3M6.500 2.500v4h-4M5 3v2.500H3" />
                  </svg>
                </Launcher>
              )}
            </GroupFooter>
          </Group>
        ))}
      </Ribbon>

      <DocTabs>
        <DocTab>
          <svg width="11" height="11" viewBox="0 0 11 11">
            <path d="M5.500 1v9M1 5.500h9" stroke="#7b673c" strokeWidth="2" />
          </svg>
          <DocName>零件001.Z3 - [草图2]</DocName>
          <TabClose aria-label="关闭标签">
            <svg width="10" height="10" viewBox="0 0 10 10">
              <path d="M1 1l8 8M9 1L1 9" stroke="#7b673c" strokeWidth="2" />
            </svg>
          </TabClose>
        </DocTab>
        <DocButton aria-label="新标签">
          <svg width="11" height="11" viewBox="0 0 11 11">
            <path d="M5.500 1v9M1 5.500h9" stroke="#9b9b9b" strokeWidth="2" />
          </svg>
        </DocButton>
        <DocButton $end aria-label="标签列表">
          <svg width="9" height="8" viewBox="0 0 9 8" fill="#8e8888">
            <path d="M0 0h9v2H0zM0 4h9L4.500 8z" />
          </svg>
        </DocButton>
      </DocTabs>

      <Canvas>
        <ViewToolbar>
          {leadTools.map((tool) => (
            <ViewItem key={tool[0]} tool={tool} />
          ))}
          <FilterSelect aria-label="选择过滤器" defaultValue="all">
            <option value="all">全部</option>
          </FilterSelect>
          {viewTools.map((tool) => (
            <ViewItem key={tool[0]} tool={tool} />
          ))}
        </ViewToolbar>
        <Hint>
          &lt;Shift +鼠标右键&gt;显示选择过滤器.
          <br />
          按下&lt;F2&gt;动态的观察
        </Hint>
        <Legend>
          {legend.map(([color, label]) => (
            <LegendRow key={label}>
              <Swatch $color={color} />
              <Tick />
              <LegendLabel>{label}</LegendLabel>
            </LegendRow>
          ))}
        </Legend>
        <SketchDrawing />
        <TriadDrawing />
        <Measure>238.005 mm</Measure>
      </Canvas>

      <StatusBar>
        <StatusText>选择命令或实体</StatusText>
        <StatusTools>
          <IconButton $w={16} aria-label="管理器">
            <svg width="14" height="14" viewBox="0 0 14 14">
              <path d="M.5.500h13v13H.5z" fill="#fff" stroke="#3e66b0" />
              <path d="M1 1h12v2H1z" fill="#5c87d4" />
              <path d="M5 3v10M2.500 5v7" stroke="#3e66b0" strokeDasharray="1 1" />
              <path d="M6 5h6M9 5v2" stroke="#444" strokeWidth="2" />
              <path d="M9 7v6" stroke="#a04a3a" strokeWidth="2" />
            </svg>
          </IconButton>
          <IconButton $w={16} aria-label="显示器">
            <svg width="16" height="13" viewBox="0 0 16 13">
              <path d="M.5.500h15v9H.5z" fill="#2db4d2" stroke="#8d9a9f" />
              <path d="M1 1h14v3H1z" fill="#62d3e8" />
              <path d="M5 10h6v3H5z" fill="#444" />
            </svg>
          </IconButton>
          <IconButton $w={16} aria-label="输出">
            <svg width="14" height="14" viewBox="0 0 14 14">
              <path d="M.5.500h13v13H.5z" fill="#fff" stroke="#3e66b0" />
              <path d="M1 1h12v3H1z" fill="#5c87d4" />
              <path d="M2 6.500h10M2 8.500h9M2 10.500h7" stroke="#777" />
            </svg>
          </IconButton>
        </StatusTools>
        <StatusInput type="text" aria-label="命令输入" />
        <Watermark>https://blog.csdn.net/weixin_43911798</Watermark>
      </StatusBar>
      <OverlayShadow />
    </Shell>
  );
}
